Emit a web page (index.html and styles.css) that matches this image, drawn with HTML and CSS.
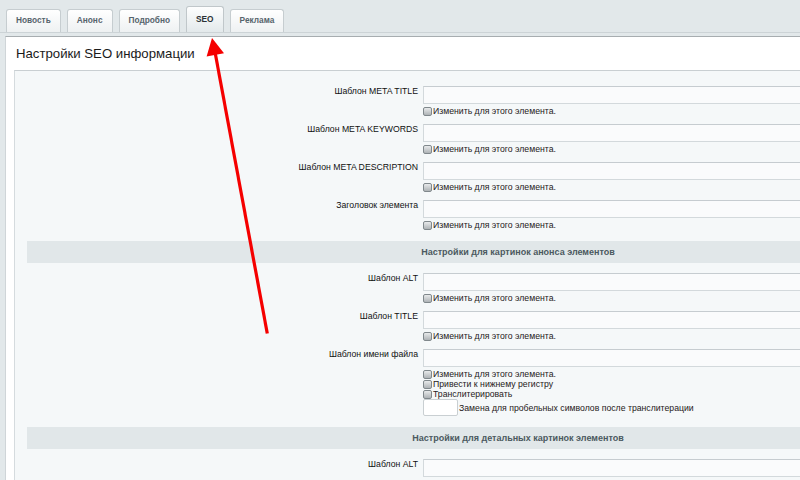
FILE: index.html
```html
<!DOCTYPE html>
<html lang="ru">
<head>
<meta charset="utf-8">
<title>Настройки SEO информации</title>
<link rel="stylesheet" href="styles.css">
</head>
<body>
<div class="tabs">
  <div class="tab">Новость</div>
  <div class="tab">Анонс</div>
  <div class="tab">Подробно</div>
  <div class="tab active">SEO</div>
  <div class="tab">Реклама</div>
</div>
<div class="panel">
  <div class="title">Настройки SEO информации</div>
  <div class="inner">
    <div class="form">
      <div class="field">
        <div class="label">Шаблон META TITLE</div>
        <div class="control">
          <div class="inp"></div>
          <div class="opts"><div class="opt"><span class="cb"></span>Изменить для этого элемента.</div></div>
        </div>
      </div>
      <div class="field">
        <div class="label">Шаблон META KEYWORDS</div>
        <div class="control">
          <div class="inp"></div>
          <div class="opts"><div class="opt"><span class="cb"></span>Изменить для этого элемента.</div></div>
        </div>
      </div>
      <div class="field">
        <div class="label">Шаблон META DESCRIPTION</div>
        <div class="control">
          <div class="inp"></div>
          <div class="opts"><div class="opt"><span class="cb"></span>Изменить для этого элемента.</div></div>
        </div>
      </div>
      <div class="field">
        <div class="label">Заголовок элемента</div>
        <div class="control">
          <div class="inp"></div>
          <div class="opts"><div class="opt"><span class="cb"></span>Изменить для этого элемента.</div></div>
        </div>
      </div>

      <div class="sect">Настройки для картинок анонса элементов</div>

      <div class="field">
        <div class="label">Шаблон ALT</div>
        <div class="control">
          <div class="inp"></div>
          <div class="opts"><div class="opt"><span class="cb"></span>Изменить для этого элемента.</div></div>
        </div>
      </div>
      <div class="field">
        <div class="label">Шаблон TITLE</div>
        <div class="control">
          <div class="inp"></div>
          <div class="opts"><div class="opt"><span class="cb"></span>Изменить для этого элемента.</div></div>
        </div>
      </div>
      <div class="field">
        <div class="label">Шаблон имени файла</div>
        <div class="control">
          <div class="inp"></div>
          <div class="opts">
            <div class="opt"><span class="cb"></span>Изменить для этого элемента.</div>
            <div class="opt"><span class="cb"></span>Привести к нижнему регистру</div>
            <div class="opt"><span class="cb"></span>Транслитерировать</div>
            <div class="repl"><span class="small-inp"></span>Замена для пробельных символов после транслитерации</div>
          </div>
        </div>
      </div>

      <div class="sect">Настройки для детальных картинок элементов</div>

      <div class="field last">
        <div class="label">Шаблон ALT</div>
        <div class="control">
          <div class="inp"></div>
        </div>
      </div>
    </div>
  </div>
</div>
<svg class="arrow" width="800" height="480" viewBox="0 0 800 480" xmlns="http://www.w3.org/2000/svg">
  <line x1="215" y1="52" x2="267.3" y2="333.5" stroke="#f50000" stroke-width="3.2" stroke-linecap="butt"/>
  <polygon points="212,38 224,53.2 206.6,56.4" fill="#f50000"/>
</svg>
</body>
</html>
```
FILE: styles.css
```css
html, body {
  margin: 0;
  padding: 0;
  overflow: hidden;
  width: 800px;
  height: 480px;
}
body {
  background: #e2e8ea;
  font-family: "Liberation Sans", Arial, sans-serif;
  color: #000;
  position: relative;
}
.tabs {
  display: flex;
  align-items: flex-end;
  gap: 6px;
  height: 26px;
  padding: 6px 0 0 6px;
  border-bottom: 1px solid #ccd3d6;
}
.tab {
  height: 23px;
  box-sizing: border-box;
  padding: 0 9px;
  border: 1px solid #c6cdd0;
  border-bottom: none;
  border-radius: 3px 3px 0 0;
  background: linear-gradient(#ffffff, #eef1f2);
  font-size: 8.3px;
  font-weight: bold;
  color: #56646c;
  line-height: 20px;
}
.tab.active {
  height: 26px;
  line-height: 24px;
  padding: 0 9px;
  color: #2a3136;
  background: linear-gradient(#fdfefe, #e3e9eb);
  border-color: #c0c7ca;
}
.panel {
  margin-top: 3px;
  margin-left: 5px;
  border-top: 1px solid #a7adb0;
  border-left: 1px solid #cfd5d8;
  background: #fff;
  overflow: hidden;
  height: 443px;
}
.title {
  height: 33px;
  line-height: 33px;
  padding-left: 10px;
  font-size: 13.2px;
  color: #1a1a1a;
}
.inner {
  margin-left: 8px;
  border-top: 1px solid #c9cfd2;
  border-left: 1px solid #d5dbde;
  background: #f5f8f9;
  padding: 15px 0 20px 12px;
  overflow: hidden;
}
.form {
  width: 982px;
  display: flex;
  flex-direction: column;
}
.field {
  display: grid;
  grid-template-columns: 391px 1fr;
  column-gap: 5px;
  margin-bottom: 8px;
}
.label {
  text-align: right;
  font-size: 8.7px;
  line-height: 11px;
  color: #111;
}
.inp {
  height: 18px;
  box-sizing: border-box;
  border: 1px solid #d3d9dc;
  border-top-color: #c6ccd0;
  background: #fafbfc;
}
.opts {
  margin-top: 2px;
  display: flex;
  flex-direction: column;
}
.opt {
  height: 10px;
  display: flex;
  align-items: center;
  font-size: 8.7px;
  color: #262020;
  white-space: nowrap;
}
.cb {
  width: 9px;
  height: 9px;
  box-sizing: border-box;
  margin-right: 1px;
  border: 1px solid #80888c;
  border-radius: 2px;
  background: linear-gradient(#e8eaeb, #aeb3b6);
}
.repl {
  display: flex;
  align-items: center;
  font-size: 8.7px;
  color: #262020;
  white-space: nowrap;
}
.small-inp {
  width: 35px;
  height: 17px;
  box-sizing: border-box;
  border: 1px solid #c9cfd2;
  border-radius: 2px;
  background: #fff;
  margin-right: 1px;
}
.sect {
  margin: 3px 0 10px;
  height: 22px;
  line-height: 22px;
  background: #e1e7e9;
  text-align: center;
  font-size: 9px;
  font-weight: bold;
  color: #4b5960;
}
.arrow {
  position: absolute;
  top: 0;
  left: 0;
  pointer-events: none;
}
```
